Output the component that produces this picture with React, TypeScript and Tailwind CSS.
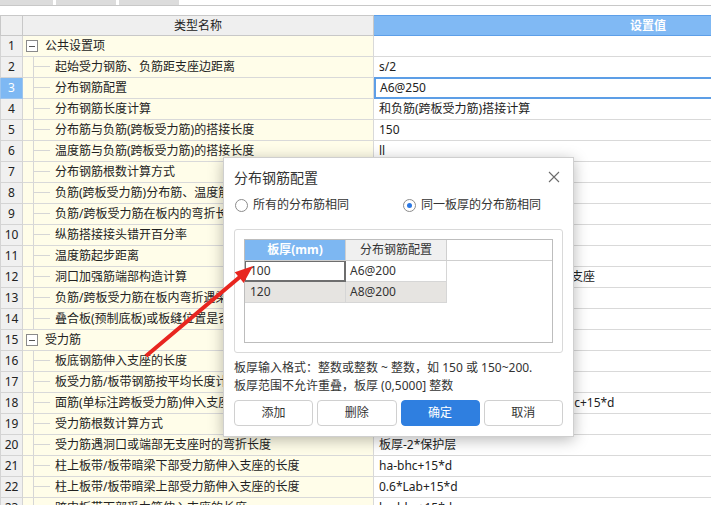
import React from "react";

type Row = { n: number; name: string; value?: string; group?: boolean };

const rows: Row[] = [
  { n: 1, name: "公共设置项", group: true },
  { n: 2, name: "起始受力钢筋、负筋距支座边距离", value: "s/2" },
  { n: 3, name: "分布钢筋配置", value: "A6@250" },
  { n: 4, name: "分布钢筋长度计算", value: "和负筋(跨板受力筋)搭接计算" },
  { n: 5, name: "分布筋与负筋(跨板受力筋)的搭接长度", value: "150" },
  { n: 6, name: "温度筋与负筋(跨板受力筋)的搭接长度", value: "ll" },
  { n: 7, name: "分布钢筋根数计算方式", value: "向下取整+1" },
  { n: 8, name: "负筋(跨板受力筋)分布筋、温度筋是否带弯勾", value: "否" },
  { n: 9, name: "负筋/跨板受力筋在板内的弯折长度", value: "板厚-2*保护层" },
  { n: 10, name: "纵筋搭接接头错开百分率", value: "50%" },
  { n: 11, name: "温度筋起步距离", value: "s" },
  { n: 12, name: "洞口加强筋端部构造计算", value: "加强筋两端按规范要求锚固，并伸入支座" },
  { n: 13, name: "负筋/跨板受力筋在板内弯折遇梁时的处理", value: "弯折" },
  { n: 14, name: "叠合板(预制底板)或板缝位置是否计算负筋", value: "是" },
  { n: 15, name: "受力筋", group: true },
  { n: 16, name: "板底钢筋伸入支座的长度", value: "max(ha/2,5*d)" },
  { n: 17, name: "板受力筋/板带钢筋按平均长度计算", value: "否" },
  { n: 18, name: "面筋(单标注跨板受力筋)伸入支座的锚固长度", value: "能直锚就直锚, 否则按公式计算ha-bhc+15*d" },
  { n: 19, name: "受力筋根数计算方式", value: "向上取整+1" },
  { n: 20, name: "受力筋遇洞口或端部无支座时的弯折长度", value: "板厚-2*保护层" },
  { n: 21, name: "柱上板带/板带暗梁下部受力筋伸入支座的长度", value: "ha-bhc+15*d" },
  { n: 22, name: "柱上板带/板带暗梁上部受力筋伸入支座的长度", value: "0.6*Lab+15*d" },
  { n: 23, name: "跨中板带下部受力筋伸入支座的长度", value: "ha-bhc+15*d" },
];

function NameCell({ r }: { r: Row }) {
  return (
    <div className="flex h-[21px] items-center overflow-hidden whitespace-nowrap border-b border-r border-[#d9d9d9] bg-[#fffde9]">
      {r.group ? (
        <>
          <span className="ml-[3px] flex h-[12px] w-[12px] shrink-0 items-center justify-center border border-[#8a8a8a] bg-white">
            <span className="h-px w-[6px] bg-[#555]" />
          </span>
          <span className="ml-[7px]">{r.name}</span>
        </>
      ) : (
        <>
          <span className="ml-[10px] flex h-full w-[17px] shrink-0 flex-col border-l border-[#d6d6d6]">
            <span className="h-1/2 border-b border-[#d6d6d6]" />
          </span>
          <span className="ml-[5px]">{r.name}</span>
        </>
      )}
    </div>
  );
}

function Radio({ checked, label }: { checked?: boolean; label: string }) {
  return (
    <div className="flex items-center">
      <span className="ml-px flex h-[13px] w-[13px] items-center justify-center rounded-full border border-[#8c8c8c] bg-white">
        {checked && <span className="h-[5px] w-[5px] rounded-full bg-[#2b78e4]" />}
      </span>
      <span className="ml-[5px]">{label}</span>
    </div>
  );
}

export default function App() {
  return (
    <div className="relative h-[505px] w-[711px] overflow-hidden bg-white font-['Noto_Sans','Noto_Sans_CJK_SC',sans-serif] text-[12px] text-[#222]">
      {/* tab strip */}
      <div className="flex h-[5px] gap-[3px]">
        <div className="w-[53px] bg-[#dcdcdc]" />
        <div className="w-[60px] bg-[#dcdcdc]" />
        <div className="w-[60px] bg-[#dcdcdc]" />
      </div>
      <div className="h-px bg-[#c8c8c8]" />
      <div className="h-[9px]" />

      {/* grid */}
      <div className="grid grid-cols-[23px_351px_548px]">
        <div className="h-[21px] border-y border-l border-r border-[#c8c8c8] bg-[#efefef]" />
        <div className="flex h-[21px] items-center justify-center border-y border-r border-[#c8c8c8] bg-[#efefef] leading-none">
          类型名称
        </div>
        <div className="flex h-[21px] items-center justify-center border-y border-[#5d9fe8] bg-[#80b9f4] font-semibold leading-none text-white">
          设置值
        </div>

        {rows.map((r) => (
          <React.Fragment key={r.n}>
            <div
              className={
                r.n === 3
                  ? "flex h-[21px] items-center justify-center border-b border-l border-r border-[#9cc4ee] bg-[#7eb8f3] text-white"
                  : "flex h-[21px] items-center justify-center border-b border-l border-r border-[#d4d4d4] bg-[#f0f0f0]"
              }
            >
              {r.n}
            </div>
            <NameCell r={r} />
            {r.n === 3 ? (
              <div className="-mt-px flex h-[22px] items-center whitespace-nowrap border-2 border-[#5d9ee6] bg-white pl-[4px]">
                {r.value}
              </div>
            ) : (
              <div className="flex h-[21px] items-center overflow-hidden whitespace-nowrap border-b border-[#d9d9d9] bg-white pl-[5px]">
                {r.value}
              </div>
            )}
          </React.Fragment>
        ))}
      </div>

      {/* dialog */}
      <div className="absolute left-[223px] top-[157px] flex h-[280px] w-[351px] flex-col border border-[#cfcfcf] bg-white pl-[10px] pr-[10px] text-[#333] shadow-[0_3px_14px_rgba(0,0,0,0.28)]">
        <div className="flex h-[38px] items-center justify-between">
          <span className="text-[14px]">分布钢筋配置</span>
          <svg width="12" height="12" viewBox="0 0 12 12" className="mr-[3px]">
            <path d="M1 1L11 11M11 1L1 11" stroke="#6b6b6b" strokeWidth="1.1" />
          </svg>
        </div>
        <div className="grid h-[18px] grid-cols-[168px_1fr] items-center">
          <Radio label="所有的分布筋相同" />
          <Radio checked label="同一板厚的分布筋相同" />
        </div>

        <div className="mt-[15px] h-[124px] w-[329px] rounded-[3px] border border-[#d9d9d9] p-[9px]">
          <div className="h-full w-full border border-[#bdbdbd]">
            <div className="flex h-[21px] border-b border-[#cfcfcf]">
              <div className="flex w-[101px] items-center justify-center border-r border-[#cfcfcf] bg-[#7db7f2] font-bold text-white">
                板厚(mm)
              </div>
              <div className="flex w-[101px] items-center justify-center border-r border-[#cfcfcf] bg-[#f0f0f0]">
                分布钢筋配置
              </div>
            </div>
            <div className="flex h-[21px]">
              <div className="flex w-[101px] items-center border-b-2 border-l border-r-2 border-t border-[#6e6e6e] pl-[4px]">
                100
              </div>
              <div className="flex w-[101px] items-center border-b border-r border-[#d6d6d6] pl-[4px]">
                A6@200
              </div>
            </div>
            <div className="flex h-[21px]">
              <div className="flex w-[101px] items-center border-b border-r border-[#d6d6d6] bg-[#e6e4e1] pl-[5px]">
                120
              </div>
              <div className="flex w-[101px] items-center border-b border-r border-[#d6d6d6] bg-[#e6e4e1] pl-[4px]">
                A8@200
              </div>
            </div>
          </div>
        </div>

        <div className="mt-[6px] leading-[18px]">
          <div>板厚输入格式：整数或整数 ~ 整数，如 150 或 150~200.</div>
          <div>板厚范围不允许重叠，板厚 (0,5000] 整数</div>
        </div>

        <div className="mt-[5px] grid h-[26px] grid-cols-4 gap-[4px]">
          <button className="rounded-[4px] border border-[#d0d0d0] bg-white">添加</button>
          <button className="rounded-[4px] border border-[#d0d0d0] bg-white">删除</button>
          <button className="rounded-[4px] border border-[#2f7fe0] bg-[#2f7fe0] text-white">确定</button>
          <button className="rounded-[4px] border border-[#d0d0d0] bg-white">取消</button>
        </div>
      </div>

      {/* red annotation arrow */}
      <svg className="pointer-events-none absolute left-0 top-0" width="711" height="505" viewBox="0 0 711 505">
        <polygon
          points="253,266 243.7,283 240.5,279.1 147.3,357.5 144.7,354.5 237.9,276.1 234.7,272.2"
          fill="#e8261f"
        />
      </svg>
    </div>
  );
}
